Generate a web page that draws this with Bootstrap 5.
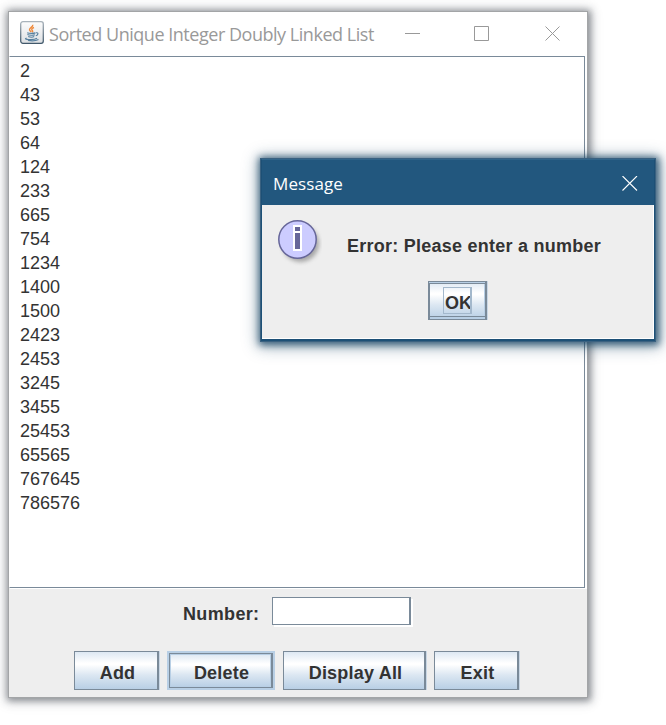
<!DOCTYPE html>
<html lang="en">
<head>
<meta charset="utf-8">
<meta name="viewport" content="width=device-width, initial-scale=1">
<title>Sorted Unique Integer Doubly Linked List</title>
<link href="https://cdn.jsdelivr.net/npm/bootstrap@5.3.0/dist/css/bootstrap.min.css" rel="stylesheet">
<style>
body { background:#fff; width:666px; height:725px; overflow:hidden; font-family:"Liberation Sans", Arial, sans-serif; font-size:18px; color:#333; }
.app-window { position:absolute; left:8px; top:11px; width:580px; height:687px; background:#eee; border:1px solid #a3a5a7; box-shadow:1px 1px 7px 2px rgba(50,55,65,.5), 0 1px 13px 2px rgba(50,55,65,.18); }
.title-bar { height:44px; background:#fff; padding-left:11px; }
.title-text { font-family:"Open Sans", "Noto Sans", sans-serif; color:#999; white-space:nowrap; line-height:24px; }
.main-title { font-size:18px; width:325px; letter-spacing:-.47px; margin-left:5px; }
.window-controls { margin-left:31px; }
.text-pane { height:532px; width:576px; background:#fff; border:1px solid #7a8a99; border-left-color:#fff; box-shadow:1px 1px #fff; padding:2px 0 0 10px; }
.text-pane div { line-height:24px; height:24px; }
.pane-wrap { background:linear-gradient(#fff,#fff) right/3px 100% no-repeat; height:533px; }
.entry-row { height:28px; margin-top:8px; padding-left:174px; }
.entry-label { width:89px; line-height:34px; letter-spacing:.35px; }
.swing-input { width:139px; height:28px; background:#fff; border:1px solid #7a8a99; border-right-width:2px; border-radius:0; box-shadow:2px 2px #fff; padding:0 4px; outline:0; }
.button-row { margin-top:26px; padding-left:65px; }
.swing-btn { height:39px; border:1px solid #7a8a99; border-right-width:2px; border-radius:0; padding:4px 0 0 3px; font-size:18px; font-weight:700; line-height:35px; letter-spacing:.2px; color:#333; background:linear-gradient(#dde8f3 0,#fff 30%,#fff 34%,#dce7f2 62%,#b8cfe5 100%); box-shadow:1px 0 #c9d7e5; }
.w-add { width:85px; margin-right:8px; }
.w-del { width:104px; height:35px; margin:2px 10px 0 2px; padding:4px 0 0 2px; line-height:31px; box-shadow:inset 1px 1px #b8cfe5, inset -1px -1px #b8cfe5, 0 0 0 2px #b8cfe5; }
.w-all { width:143px; margin-right:8px; }
.w-exit { width:85px; }
.dialog-window { position:absolute; left:261px; top:159px; width:394px; height:182px; background:#eee; border:1px solid #1d5076; border-top-color:#31658a; border-bottom-width:2px; box-shadow:0 0 0 1px #3a6180, 1px 1px 7px 3px rgba(20,65,98,.75), 1px 2px 15px 4px rgba(20,65,98,.4); }
.dialog-head { height:45px; background:#22577e; padding:3px 16px 0 11px; }
.dialog-head .title-text { color:#fff; font-size:17px; letter-spacing:.1px; }
.dialog-content { height:134px; border-right:1px solid #fff; border-bottom:1px solid #fff; padding:13px 0 0 14px; }
.message-text { margin:18px 0 0 25px; line-height:20px; white-space:nowrap; letter-spacing:.25px; }
.ok-btn { width:59px; margin:15px 0 0 152px; padding:5px 0 0 14px; letter-spacing:0; box-shadow:inset 0 1px #b8cfe5, inset 0 2px #7a8a99, inset 1px 0 #7a8a99, inset 0 -2px #b8cfe5, inset 0 -3px #7a8a99, inset -1px 0 #b8cfe5, 1px 0 #c9d7e5; }
.ok-focus { width:29px; height:27px; border:1px solid #a3b8cc; border-right-width:2px; line-height:31px; overflow:hidden; padding-left:1px; text-align:left; }
</style>
<script src="https://cdn.jsdelivr.net/npm/bootstrap@5.3.0/dist/js/bootstrap.bundle.min.js"></script>
</head>
<body>
<main class="app-window">
  <header class="title-bar d-flex align-items-center">
    <svg class="flex-shrink-0 mb-1" width="24" height="23" viewBox="0 0 24 23">
      <defs><linearGradient id="jbg" x2="0" y2="1"><stop stop-color="#fcfcfc"/><stop offset="1" stop-color="#dde0e3"/></linearGradient>
      <linearGradient id="jst" x2="0" y2="1"><stop stop-color="#a9b3bb"/><stop offset="1" stop-color="#41586b"/></linearGradient></defs>
      <rect x=".7" y=".7" width="22.6" height="21.6" rx="2.2" fill="url(#jbg)" stroke="url(#jst)" stroke-width="1.3"/>
      <path d="M12.7 3.8c1 2-3.6 3-3.2 5 .2 1 1.3 1.4 1.6 2.3M14 6.500c-3 1-2.500 2.400-1.500 3.200.4.5.1 1.100-.3 1.500" fill="none" stroke="#ef8a3c" stroke-width="1.400"/>
      <path d="M7.200 11.700c2 1 6.500.9 8.300.2M7.400 13.500c2 1 6 .9 7.500.2M8.200 15.500c1.800.8 4.700.8 6 .1M16 11.800c3.200-.6 2 2.300-.2 3M6.600 17c-5 1.700 7.600 2.400 10.400.3M8 19.500c3.500.5 8 .4 10.500-1" fill="none" stroke="#57809f" stroke-width="1.150"/>
    </svg>
    <div class="title-text main-title">Sorted Unique Integer Doubly Linked List</div>
    <svg class="window-controls" width="160" height="20" viewBox="0 0 160 20" fill="none" stroke="#999" stroke-width="1">
      <path d="M0 9.500h15M69.500 2.500h14v14h-14zM140.500 2.500l14 14M154.500 2.500l-14 14"/>
    </svg>
  </header>
  <div class="pane-wrap">
    <div class="text-pane">
      <div>2</div><div>43</div><div>53</div><div>64</div><div>124</div><div>233</div><div>665</div><div>754</div><div>1234</div><div>1400</div><div>1500</div><div>2423</div><div>2453</div><div>3245</div><div>3455</div><div>25453</div><div>65565</div><div>767645</div><div>786576</div>
    </div>
  </div>
  <div class="entry-row d-flex">
    <label class="entry-label fw-bold" for="number">Number:</label>
    <input id="number" class="swing-input" type="text">
  </div>
  <div class="button-row d-flex">
    <button class="swing-btn w-add">Add</button>
    <button class="swing-btn w-del">Delete</button>
    <button class="swing-btn w-all">Display All</button>
    <button class="swing-btn w-exit">Exit</button>
  </div>
</main>
<section class="dialog-window" role="dialog">
  <header class="dialog-head d-flex align-items-center justify-content-between">
    <div class="title-text">Message</div>
    <svg width="16" height="16" viewBox="0 0 16 16" fill="none" stroke="#fff" stroke-width="1.1"><path d="M.5 0l14.500 14.500M15 0L.5 14.500"/></svg>
  </header>
  <div class="dialog-content">
    <div class="d-flex align-items-start">
      <svg width="46" height="48" viewBox="0 0 46 48">
        <defs><filter id="soft" x="-30%" y="-30%" width="160%" height="160%"><feGaussianBlur stdDeviation="2"/></filter></defs>
        <circle cx="24.500" cy="25.500" r="18.500" fill="#777" opacity=".6" filter="url(#soft)"/>
        <circle cx="21.500" cy="21.500" r="18.700" fill="#ccccff" stroke="#666699" stroke-width="1.500"/>
        <path d="M17 7h9v26h-9z" fill="#fff"/>
        <path d="M19 9h5v4h-5zM19 15h5v16h-5z" fill="#666699"/>
      </svg>
      <div class="message-text fw-bold">Error: Please enter a number</div>
    </div>
    <button class="swing-btn ok-btn d-flex"><span class="ok-focus">OK</span></button>
  </div>
</section>
</body>
</html>
